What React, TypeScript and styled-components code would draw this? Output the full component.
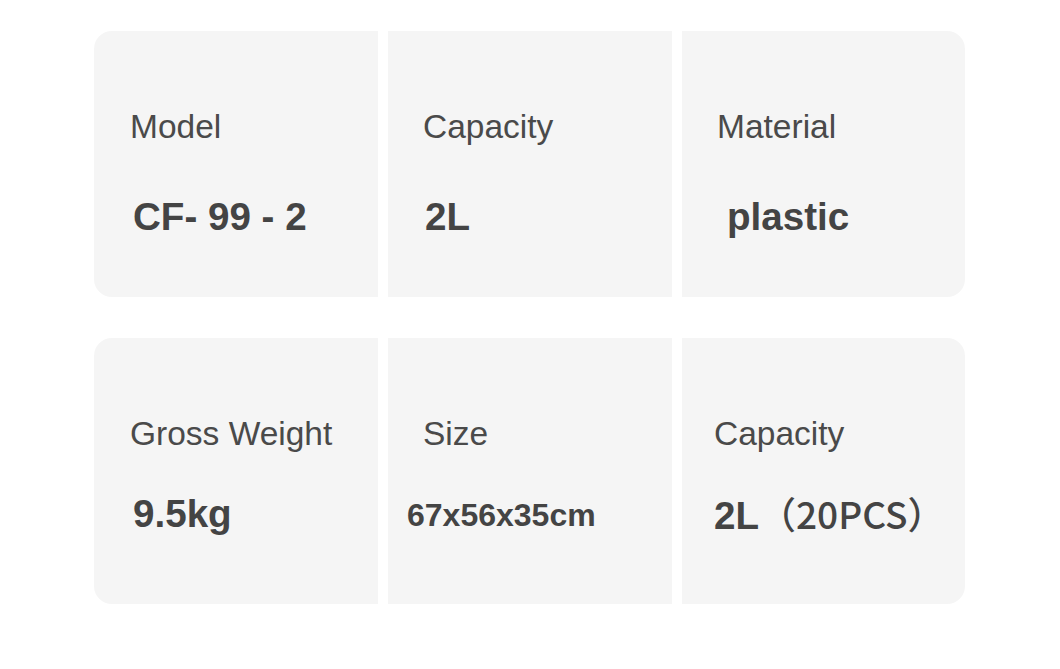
import React from "react";
import styled, { createGlobalStyle } from "styled-components";

const GlobalStyle = createGlobalStyle`
  html, body { margin: 0; padding: 0; background: #ffffff; }
  body { font-family: "Liberation Sans", Arial, sans-serif; }
`;

const Page = styled.div`
  width: 1060px;
  height: 669px;
  box-sizing: border-box;
  padding: 31px 0 0 94px;
  display: flex;
  flex-direction: column;
  gap: 41px;
`;

const Row = styled.div`
  display: grid;
  grid-template-columns: 284px 284px 283px;
  column-gap: 10px;
`;

type Edge = "first" | "middle" | "last";

const Card = styled.div<{ $edge: Edge }>`
  height: 266px;
  box-sizing: border-box;
  background: #f5f5f5;
  padding: 79px 0 0 36px;
  display: flex;
  flex-direction: column;
  border-radius: ${(p) =>
    p.$edge === "first" ? "18px 0 0 18px" : p.$edge === "last" ? "0 18px 18px 0" : "0"};
`;

const Label = styled.div<{ $dx: number }>`
  font-family: "Liberation Sans", Arial, sans-serif;
  font-size: 33.5px;
  line-height: 1;
  color: #4a4a4a;
  margin-left: ${(p) => p.$dx}px;
  white-space: nowrap;
`;

const Value = styled.div<{ $dx: number; $gap: number; $size: number }>`
  font-family: "Liberation Sans", Arial, sans-serif;
  font-weight: 700;
  font-size: ${(p) => p.$size}px;
  line-height: 1;
  color: #444444;
  margin-top: ${(p) => p.$gap}px;
  margin-left: ${(p) => p.$dx}px;
  white-space: pre;
`;

const Cjk = styled.span`
  font-family: "Noto Sans CJK SC", "Noto Sans", sans-serif;
  font-weight: 500;
  font-size: 37px;
`;

type Item = {
  label: string;
  labelDx: number;
  value: React.ReactNode;
  valueDx: number;
  gap: number;
  size: number;
};

const rows: Item[][] = [
  [
    { label: "Model", labelDx: 0, value: "CF- 99 - 2", valueDx: 3, gap: 54, size: 38.6 },
    { label: "Capacity", labelDx: -1, value: "2L", valueDx: 1, gap: 54, size: 38.6 },
    { label: "Material", labelDx: -1, value: "plastic", valueDx: 9, gap: 54, size: 38.6 },
  ],
  [
    { label: "Gross Weight", labelDx: 0, value: "9.5kg", valueDx: 3, gap: 44, size: 38.6 },
    { label: "Size", labelDx: -1, value: "67x56x35cm", valueDx: -17, gap: 48, size: 32 },
    {
      label: "Capacity",
      labelDx: -4,
      value: (
        <>
          2L<Cjk>（20PCS）</Cjk>
        </>
      ),
      valueDx: -4,
      gap: 44,
      size: 38.6,
    },
  ],
];

const edgeOf = (i: number, n: number): Edge => (i === 0 ? "first" : i === n - 1 ? "last" : "middle");

export default function App() {
  return (
    <>
      <GlobalStyle />
      <Page>
        {rows.map((row, r) => (
          <Row key={r}>
            {row.map((it, i) => (
              <Card key={i} $edge={edgeOf(i, row.length)}>
                <Label $dx={it.labelDx}>{it.label}</Label>
                <Value $dx={it.valueDx} $gap={it.gap} $size={it.size}>
                  {it.value}
                </Value>
              </Card>
            ))}
          </Row>
        ))}
      </Page>
    </>
  );
}
